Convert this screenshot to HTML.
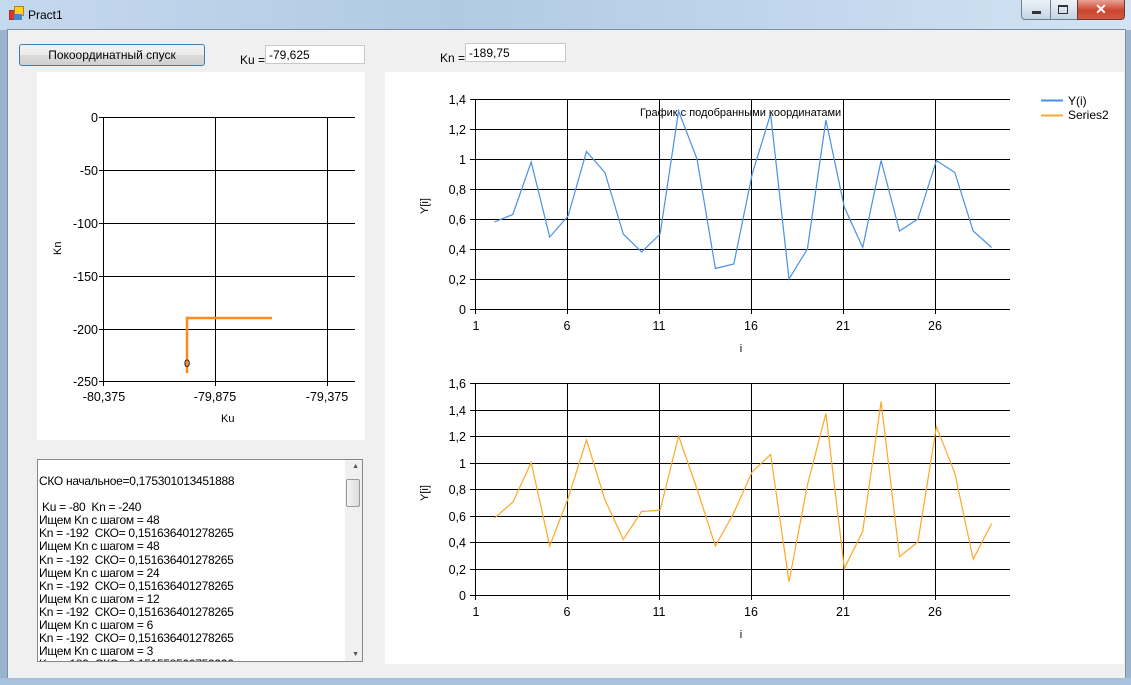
<!DOCTYPE html>
<html><head><meta charset="utf-8"><style>
body{margin:0;width:1131px;height:685px;overflow:hidden;background:#9ab4cf;font-family:"Liberation Sans",sans-serif;position:relative}
.t{position:absolute;left:0;top:0;width:1131px;height:30px;background:linear-gradient(90deg,#c5d9ee,#b1c9e3 40%,#c7dbef 80%,#d3e3f3)}
.client{position:absolute;left:7px;top:29px;width:1117px;height:648px;background:#f0f0f0;border:1px solid #7d8fa3}
.bot{position:absolute;left:0;top:678px;width:1131px;height:7px;background:#a9c1dc}
.abs{position:absolute}
.tb{position:absolute;height:19px;background:#fff;border:1px solid #c4c9cf;font-size:12px;line-height:19px;padding-left:3px;box-sizing:border-box}
</style></head><body>
<div class="t">
<div class="abs" style="left:9px;top:10px;width:8px;height:8px;background:#d33;border:1px solid #933"></div>
<div class="abs" style="left:14px;top:6px;width:8px;height:8px;background:#fc3;border:1px solid #a80"></div>
<div class="abs" style="left:14px;top:14px;width:8px;height:6px;background:#48c;"></div>
<div class="abs" style="left:28px;top:8px;font-size:12px;color:#000">Pract1</div>
<div class="abs" style="left:1021px;top:0;width:28px;height:19px;background:linear-gradient(#eef3f8,#c5d3e2);border:1px solid #6d7f93;border-top:0;border-radius:0 0 0 4px"></div>
<div class="abs" style="left:1032px;top:11px;width:9px;height:3px;background:#333"></div>
<div class="abs" style="left:1050px;top:0;width:26px;height:19px;background:linear-gradient(#eef3f8,#c5d3e2);border:1px solid #6d7f93;border-top:0"></div>
<div class="abs" style="left:1058px;top:5px;width:8px;height:6px;border:1px solid #333;border-top-width:2px"></div>
<div class="abs" style="left:1077px;top:0;width:46px;height:19px;background:linear-gradient(#e8a393,#c9462f 55%,#d45a40);border:1px solid #6d3a32;border-top:0;border-radius:0 0 4px 0;color:#fff;font-size:14px;font-weight:bold;text-align:center;line-height:19px">✕</div>
</div>
<div class="client"></div>
<div class="bot"></div>
<div class="abs" style="left:19px;top:44px;width:184px;height:20px;border:1px solid #3c7fb1;border-radius:3px;background:linear-gradient(#f2f2f2,#ebebeb 50%,#dddddd 51%,#cfcfcf);font-size:12px;text-align:center;line-height:20px">Покоординатный спуск</div>
<div class="abs" style="left:240px;top:53px;font-size:12px">Ku =</div>
<div class="tb" style="left:265px;top:45px;width:100px">-79,625</div>
<div class="abs" style="left:440px;top:51px;font-size:12px">Kn =</div>
<div class="tb" style="left:465px;top:43px;width:101px">-189,75</div>

<svg class="abs" style="left:0;top:0" width="1131" height="685" font-family="Liberation Sans, sans-serif">
<rect x="37" y="72" width="328" height="368" fill="#fff"/>
<rect x="385" y="72" width="739" height="592" fill="#fff"/>
<g stroke="#000" stroke-width="1" fill="none">
<path d="M104 117.5H355M104 170.5H355M104 223.5H355M104 276.5H355M104 329.5H355M99 381.5H355M103.5 117V386M215.5 117V386M327.5 117V386M99 117.5h5M99 170.5h5M99 223.5h5M99 276.5h5M99 329.5h5"/>
</g>
<path d="M187 373V318H272" stroke="#ff8c1a" stroke-width="2.5" fill="none"/>
<g font-size="12.5" fill="#000">
<text x="98" y="122" text-anchor="end">0</text>
<text x="98" y="175" text-anchor="end">-50</text>
<text x="98" y="228" text-anchor="end">-100</text>
<text x="98" y="281" text-anchor="end">-150</text>
<text x="98" y="334" text-anchor="end">-200</text>
<text x="98" y="386" text-anchor="end">-250</text>
<text x="104" y="401" text-anchor="middle">-80,375</text>
<text x="215" y="401" text-anchor="middle">-79,875</text>
<text x="327" y="401" text-anchor="middle">-79,375</text>
<text x="184" y="367" font-size="11">0</text>
<text x="221" y="422" font-size="11">Ku</text>
<text transform="translate(61 255) rotate(-90)" font-size="11">Kn</text>
</g>
<g stroke="#000" fill="none">
<path d="M470 99.5H1010M470 129.5H1010M470 159.5H1010M470 189.5H1010M470 219.5H1010M470 249.5H1010M470 279.5H1010M470 309.5H1010M475.5 99V314M567.5 99V314M659.5 99V314M751.5 99V314M843.5 99V314M935.5 99V314"/>
<path d="M470 383.5H1010M470 410.5H1010M470 436.5H1010M470 463.5H1010M470 489.5H1010M470 516.5H1010M470 542.5H1010M470 569.5H1010M470 595.5H1010M475.5 383V600M567.5 383V600M659.5 383V600M751.5 383V600M843.5 383V600M935.5 383V600"/>
</g>
<polyline fill="none" stroke="#4a90e8" stroke-width="1.2" points="494.4,222 512.8,214.5 531.2,162 549.7,237 568.1,216 586.5,151.5 604.9,172.5 623.3,234 641.7,252 660.1,234 678.6,111 697,159 715.4,268.5 733.8,264 752.2,174 770.6,114 789,279 807.4,249 825.9,120 844.3,207 862.7,247.5 881.1,160.5 899.5,231 917.9,219 936.4,160.5 954.8,172.5 973.2,231 991.6,247.5"/>
<polyline fill="none" stroke="#ffa726" stroke-width="1.2" points="494.4,518.2 512.8,502.2 531.2,462.5 549.7,546 568.1,498.3 586.5,440 604.9,499.6 623.3,539.4 641.7,511.5 660.1,510.2 678.6,436 697,489 715.4,546 733.8,512.9 752.2,471.8 770.6,454.5 789,581.8 807.4,485 825.9,413.5 844.3,568.5 862.7,531.4 881.1,401.5 899.5,556.6 917.9,542 936.4,426.7 954.8,473 973.2,559.2 991.6,523.5"/>
<g font-size="12.5" fill="#000" text-anchor="end">
<text x="466" y="104">1,4</text><text x="466" y="134">1,2</text><text x="466" y="164">1</text><text x="466" y="194">0,8</text><text x="466" y="224">0,6</text><text x="466" y="254">0,4</text><text x="466" y="284">0,2</text><text x="466" y="314">0</text>
<text x="466" y="388">1,6</text><text x="466" y="415">1,4</text><text x="466" y="441">1,2</text><text x="466" y="468">1</text><text x="466" y="494">0,8</text><text x="466" y="521">0,6</text><text x="466" y="547">0,4</text><text x="466" y="574">0,2</text><text x="466" y="600">0</text>
</g>
<g font-size="12.5" fill="#000" text-anchor="middle">
<text x="476" y="330">1</text><text x="567" y="330">6</text><text x="659" y="330">11</text><text x="751" y="330">16</text><text x="843" y="330">21</text><text x="935" y="330">26</text>
<text x="476" y="616">1</text><text x="567" y="616">6</text><text x="659" y="616">11</text><text x="751" y="616">16</text><text x="843" y="616">21</text><text x="935" y="616">26</text>
<text x="741" y="352" font-size="11">i</text><text x="741" y="638" font-size="11">i</text>
</g>
<text transform="translate(428 214) rotate(-90)" font-size="11">Y[i]</text>
<text transform="translate(428 501) rotate(-90)" font-size="11">Y[i]</text>
<text x="640" y="116" font-size="11">График с подобранными координатами</text>
<path d="M1041 100.5H1063" stroke="#4a90e8" stroke-width="2"/>
<path d="M1041 115.5H1063" stroke="#ffa726" stroke-width="2"/>
<text x="1068" y="105" font-size="12">Y(i)</text>
<text x="1068" y="119" font-size="12">Series2</text>
</svg>

<div class="abs" style="left:37px;top:459px;width:326px;height:203px;background:#fff;border:1px solid #828790;box-sizing:border-box;overflow:hidden">
<div style="position:absolute;left:1px;top:15px;font-size:12px;line-height:13.1px;white-space:pre;letter-spacing:-0.3px">СКО начальное=0,175301013451888

 Ku = -80  Kn = -240
Ищем Kn с шагом = 48
Kn = -192  СКО= 0,151636401278265
Ищем Kn с шагом = 48
Kn = -192  СКО= 0,151636401278265
Ищем Kn с шагом = 24
Kn = -192  СКО= 0,151636401278265
Ищем Kn с шагом = 12
Kn = -192  СКО= 0,151636401278265
Ищем Kn с шагом = 6
Kn = -192  СКО= 0,151636401278265
Ищем Kn с шагом = 3
Kn = -189  СКО= 0,151558500752226</div>
<div style="position:absolute;right:0;top:0;width:17px;height:201px;background:#f0f0f0"></div>
<div style="position:absolute;right:3px;top:3px;font-size:7px;color:#555">▲</div>
<div style="position:absolute;right:2px;top:19px;width:12px;height:26px;border:1px solid #999;border-radius:2px;background:linear-gradient(90deg,#f4f4f4,#dcdcdc)"></div>
<div style="position:absolute;right:3px;bottom:3px;font-size:7px;color:#555">▼</div>
</div>
</body></html>
